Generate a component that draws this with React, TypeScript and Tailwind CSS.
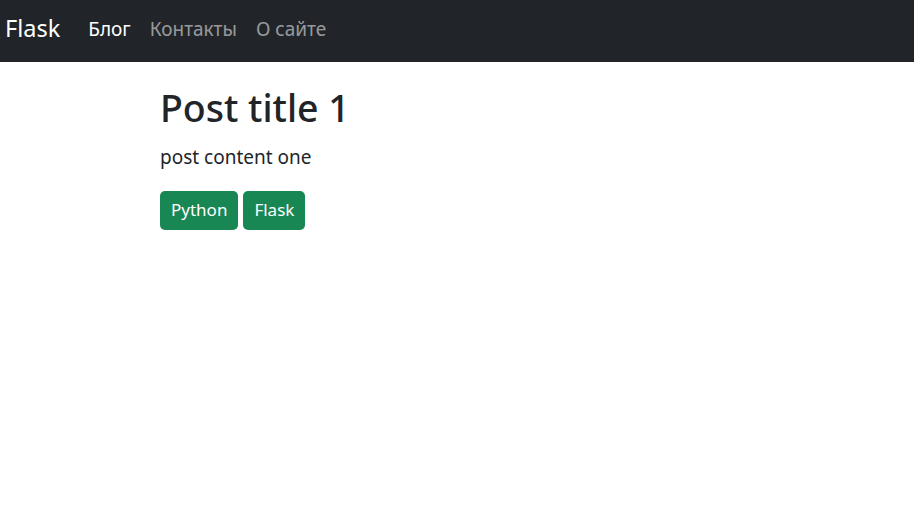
export default function App() {
    const tags = ['Python', 'Flask'];

    return <div className="min-h-[523px] bg-white text-[#212529]" style={{ fontFamily: '"Noto Sans", "Open Sans", sans-serif' }}>
        <nav className="h-[62px] bg-[#212529] flex items-center px-[5px] pb-[4px]">
            <a className="text-[23.5px] text-white mr-[28px]">Flask</a>
            <ul className="flex items-center gap-[19px] text-[19px]">
                <li className="text-white">Блог</li>
                <li className="text-[#ffffff8c]">Контакты</li>
                <li className="text-[#ffffff8c]">О сайте</li>
            </ul>
        </nav>
        <main className="pl-[160px] pt-[23px]">
            <h1 className="text-[37.5px] font-medium leading-[1.2] mb-[13px]">Post title 1</h1>
            <p className="text-[19px] mb-[19px]">post content one</p>
            <div className="flex gap-[5px]">
                {tags.map(tag =>
                    <span key={tag} className="bg-[#198754] text-white text-[17px] rounded-[5px] px-[11px] h-[39px] flex items-center">
                        {tag}
                    </span>
                )}
            </div>
        </main>
    </div>
}
